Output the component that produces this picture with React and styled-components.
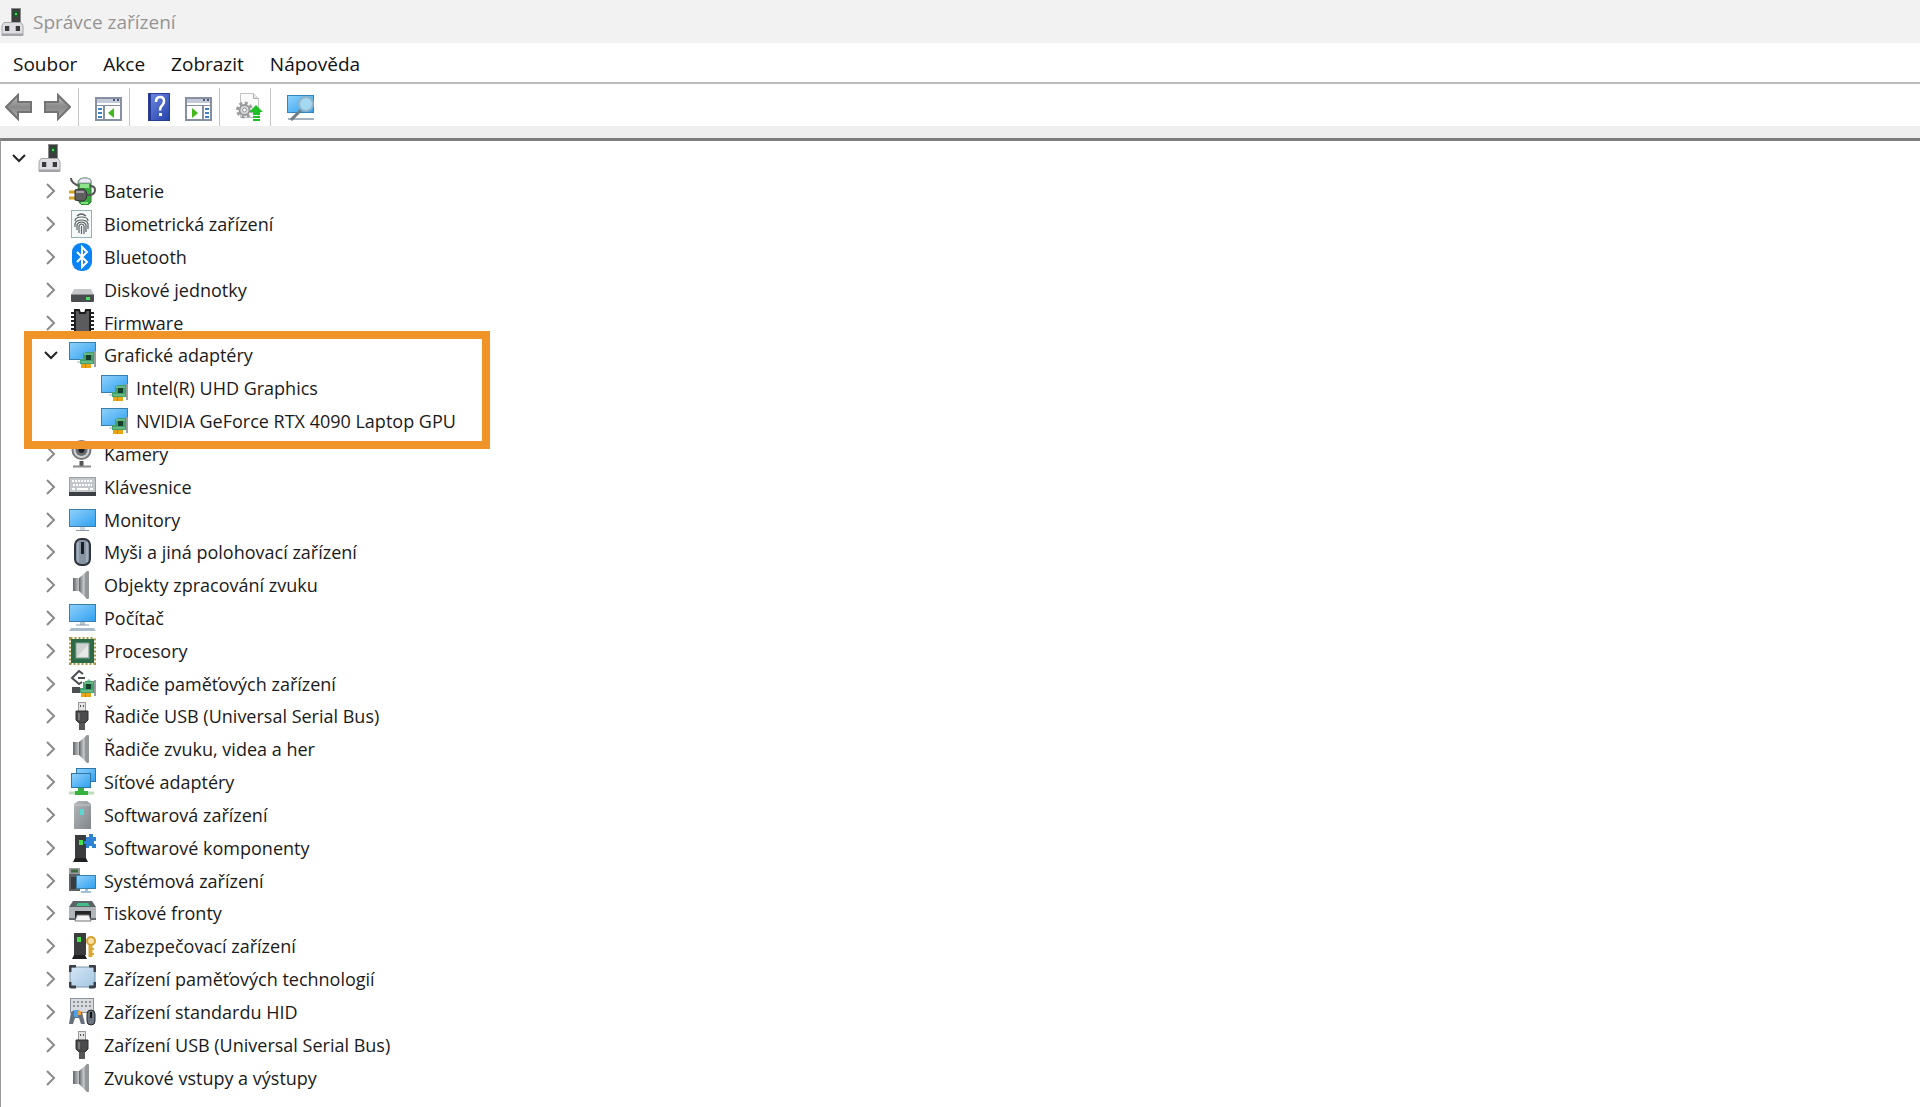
import React, { useState } from "react";
import styled, { createGlobalStyle } from "styled-components";

const Icon = ({ children }) => (
  <Glyph viewBox="0 0 27 28" aria-hidden="true">
    {children}
  </Glyph>
);

const Defs = () => (
  <HiddenSvg aria-hidden="true">
    <defs>
      <linearGradient id="screen" x1="0" y1="0" x2="1" y2="1">
        <stop offset="0" stopColor="#8fd2fb" />
        <stop offset="1" stopColor="#2f9ff0" />
      </linearGradient>
      <linearGradient id="steel" x1="0" y1="0" x2="1" y2="0">
        <stop offset="0" stopColor="#5f6266" />
        <stop offset="0.35" stopColor="#9a9da0" />
        <stop offset="0.7" stopColor="#c9cbcd" />
        <stop offset="1" stopColor="#85888b" />
      </linearGradient>
      <linearGradient id="arrow" x1="0" y1="0" x2="0" y2="1">
        <stop offset="0" stopColor="#bdbdbd" />
        <stop offset="0.5" stopColor="#8a8a8a" />
        <stop offset="1" stopColor="#ababab" />
      </linearGradient>
      <linearGradient id="tower" x1="0" y1="0" x2="1" y2="1">
        <stop offset="0" stopColor="#b4b8bb" />
        <stop offset="1" stopColor="#80858a" />
      </linearGradient>
      <linearGradient id="help" x1="0" y1="0" x2="1" y2="1">
        <stop offset="0" stopColor="#6f8be6" />
        <stop offset="1" stopColor="#2540a8" />
      </linearGradient>
      <linearGradient id="cell" x1="0" y1="0" x2="1" y2="1">
        <stop offset="0" stopColor="#d4e6f5" />
        <stop offset="1" stopColor="#a3c6e2" />
      </linearGradient>
    </defs>
  </HiddenSvg>
);

const RootIcon = () => (
  <Icon>
    <rect x="11.5" y="0.5" width="9" height="15" fill="#3b403e" stroke="#8a8a8a" />
    <rect x="14" y="3" width="4" height="6" fill="#1c5a2a" />
    <rect x="15" y="5" width="2" height="2" fill="#46e05c" />
    <path d="M4 14.5h17l2 3v10H2v-10z" fill="#dedee2" stroke="#a6a6ab" />
    <path d="M2 26.5h21" stroke="#a1a1a6" strokeWidth="2" />
    <rect x="5" y="18" width="4" height="5" fill="#3a3a3a" />
    <rect x="16" y="18" width="4" height="5" fill="#3a3a3a" />
    <path d="M9.500 18v5M15.500 18v5" stroke="#b0b0b4" />
  </Icon>
);

const BatteryIcon = () => (
  <Icon>
    <path d="M9 6q0-5 7-5t6 5v19q-1 3-6 3t-6-3z" fill="#35a83c" stroke="#2c7d33" />
    <path d="M9.500 6q0-5 6.500-5t6 5z" fill="#ececf6" stroke="#9c9caa" />
    <path d="M11 9h9" stroke="#8ce58a" strokeWidth="4" />
    <path d="M12 26h7" stroke="#7fe07f" strokeWidth="2" />
    <path d="M2 1q0 5 8 8M21 9q5 0 5 4t-5 5h-4" fill="none" stroke="#555" strokeWidth="2" />
    <path d="M0 15h6M0 21h6" stroke="#d9a520" strokeWidth="3" />
    <path d="M6 13l4-1h5q3 2 3 6t-3 6h-4l-5-1z" fill="#5f5f5f" stroke="#333" />
    <path d="M7 15h8" stroke="#a2a2a2" strokeWidth="2" />
  </Icon>
);

const FingerprintIcon = () => (
  <Icon>
    <rect x="2.5" y="0.5" width="20" height="27" fill="#f3f8f8" stroke="#8fb4b4" />
    <g fill="none" stroke="#5b6163" strokeWidth="1.2">
      <path d="M8 6q4-4 9 0M6 11q0-4 6.500-4T19 11" />
      <path d="M6 17v-3q1-4 6.500-4t6.500 4v5M8 20v-5q1-3 4.500-3t4.500 3v7M10 23v-7q1-2 2.500-2t2.500 2v8M12.500 24v-8" />
    </g>
  </Icon>
);

const BluetoothIcon = () => (
  <Icon>
    <rect x="3" y="0" width="20" height="28" rx="9" fill="#0a84f5" />
    <path d="M8 9l10 10-5 5V4l5 5L8 19" fill="none" stroke="#fff" strokeWidth="2" />
  </Icon>
);

const DiskIcon = () => (
  <Icon>
    <path d="M5 13h17l3 6H2z" fill="#c4c6c8" />
    <rect x="2" y="18" width="23" height="8" rx="1" fill="#4a4d50" />
    <path d="M2 18.5h23" stroke="#8d9093" />
    <rect x="17" y="21" width="4" height="3" fill="#46e05c" />
  </Icon>
);

const FirmwareIcon = () => (
  <Icon>
    <path d="M3.500 3v25M23.500 3v25" stroke="#222" strokeWidth="3" strokeDasharray="2 2" />
    <path d="M6 1h4l1 3h5l1-3h4v27H6z" fill="#5b5b5d" stroke="#1c1c1c" strokeWidth="2" />
  </Icon>
);

const Card = () => (
  <g>
    <path d="M14 12h2v-1h9v12H11v-5h3z" fill="#42a06a" />
    <path d="M15 13h9M12 21h12" stroke="#8fd0a2" />
    <rect x="17" y="14" width="5" height="5" fill="#153f2b" />
    <path d="M26 10v16" stroke="#9b9ea1" strokeWidth="2" />
    <path d="M12 25h10" stroke="#eba512" strokeWidth="4" />
    <path d="M16.500 23v4" stroke="#c98408" />
  </g>
);

const DisplayIcon = () => (
  <Icon>
    <rect x="0.5" y="1.5" width="26" height="17" fill="url(#screen)" stroke="#3b7ea8" />
    <path d="M8 21h5v-3h2" fill="none" stroke="#9bb4c4" />
    <Card />
  </Icon>
);

const CameraIcon = () => (
  <Icon>
    <circle cx="12.5" cy="10" r="9" fill="#d0d2d4" stroke="#77797b" strokeWidth="2" />
    <circle cx="12.5" cy="10" r="6" fill="#6b6e72" />
    <circle cx="12.5" cy="10" r="3" fill="#1e2124" />
    <path d="M12.500 21v5" stroke="#555" strokeWidth="4" />
    <path d="M4 26.5h18" stroke="#8b8b8b" strokeWidth="2" />
  </Icon>
);

const KeyboardIcon = () => (
  <Icon>
    <rect x="0.5" y="4.5" width="26" height="15" fill="#c3c6cb" stroke="#9a9ea5" />
    <path d="M3 8h21M4 12h19" stroke="#fff" strokeWidth="2" strokeDasharray="2 1" />
    <path d="M3 16h3M8 16h11M21 16h3" stroke="#fff" strokeWidth="2" />
    <rect x="0" y="19" width="27" height="4" fill="#3c3f44" />
  </Icon>
);

const MonitorIcon = () => (
  <Icon>
    <rect x="0.5" y="3.5" width="26" height="17" fill="url(#screen)" stroke="#3b7ea8" />
    <path d="M11 21h5v3h-5z" fill="#cfd6dc" />
    <path d="M7 24.5h13" stroke="#8a9aa8" />
  </Icon>
);

const MouseIcon = () => (
  <Icon>
    <rect x="6" y="1" width="15" height="26" rx="6" fill="#8593a2" stroke="#30353b" strokeWidth="2" />
    <path d="M9 4v20M18 4v20" stroke="#bcc6d0" />
    <path d="M13.500 4v12" stroke="#1b1f24" strokeWidth="3" />
  </Icon>
);

const SpeakerIcon = () => (
  <Icon>
    <rect x="4" y="7" width="9" height="13" fill="url(#steel)" />
    <path d="M10 7l7-6v26l-7-7z" fill="url(#steel)" />
    <rect x="17" y="0" width="3" height="28" rx="1" fill="#94979a" />
  </Icon>
);

const ComputerIcon = () => (
  <Icon>
    <rect x="0.5" y="0.5" width="26" height="17" fill="url(#screen)" stroke="#3b7ea8" />
    <path d="M11 18h5v3h-5z" fill="#b9c4ce" />
    <path d="M7 21h13" stroke="#8a9aa8" />
    <path d="M2 24h23l2 3H0z" fill="#a9bccb" />
  </Icon>
);

const CpuIcon = () => (
  <Icon>
    <rect x="1.5" y="1.5" width="24" height="25" fill="none" stroke="#a8983f" strokeWidth="3" strokeDasharray="2 2" />
    <rect x="2" y="2" width="23" height="24" fill="#2c6a48" />
    <rect x="7" y="6" width="13" height="15" fill="#cfd2d1" stroke="#87a596" />
    <path d="M8 20L19 8v12z" fill="#e6e8e7" />
  </Icon>
);

const StorageCtlIcon = () => (
  <Icon>
    <path d="M14 4l-4-3-7 7 7 6 3-2" fill="none" stroke="#4b4e51" strokeWidth="2" />
    <path d="M9 8h7" stroke="#4b4e51" strokeWidth="2" />
    <path d="M3 17h8v6H3z" fill="#4a4e51" />
    <path d="M14 14l6-5 5 5z" fill="#7cc896" />
    <Card />
  </Icon>
);

const UsbIcon = () => (
  <Icon>
    <rect x="9.5" y="0.5" width="7" height="10" fill="#e3e3e3" stroke="#999" />
    <path d="M11 4h1M14 4h1" stroke="#555" strokeWidth="2" />
    <path d="M7 9h12v9l-3 3h-6l-3-3z" fill="#4b4b4d" stroke="#2e2e30" />
    <path d="M10 11v7" stroke="#777" strokeWidth="2" />
    <rect x="10" y="21" width="6" height="7" fill="#555" />
  </Icon>
);

const NetworkIcon = () => (
  <Icon>
    <rect x="7.5" y="0.5" width="19" height="13" fill="url(#screen)" stroke="#2f75a5" />
    <rect x="2.5" y="5.5" width="19" height="14" fill="url(#screen)" stroke="#2f75a5" />
    <path d="M9 20h6v3h4v4H6v-4h3z" fill="#36b13e" />
    <path d="M0 25h6M19 25h6" stroke="#b8dfb9" strokeWidth="3" />
  </Icon>
);

const SoftDeviceIcon = () => (
  <Icon>
    <path d="M5 3l4-3h9l4 3v25H5z" fill="url(#tower)" />
    <path d="M5 4h17" stroke="#c7cacc" />
    <rect x="11" y="8" width="4" height="6" fill="#58d6cf" />
  </Icon>
);

const SoftComponentIcon = () => (
  <Icon>
    <path d="M6 1h11v23H6z" fill="#3a3c3e" />
    <path d="M4 28l2-4h11l2 4z" fill="#1f2022" />
    <rect x="10" y="6" width="4" height="5" fill="#46e04c" />
    <path d="M17 3h3V0h4v3h3v4h-2v3h2v4h-4v-2h-3v2h-3v-4h-2V7h2z" fill="#2f83d4" />
  </Icon>
);

const SystemIcon = () => (
  <Icon>
    <path d="M0 1h11v23H0z" fill="#5d6163" />
    <path d="M0 1h11v6H0z" fill="#9a9d9e" />
    <path d="M2 4h7" stroke="#3c6b3e" strokeWidth="3" />
    <path d="M2 10h6v12H2z" fill="#3a3d40" />
    <rect x="7.5" y="8.5" width="19" height="13" fill="url(#screen)" stroke="#3b7ea8" />
    <path d="M16 22h3v2h-3zM12 24h10v2H12z" fill="#9fc2d8" />
  </Icon>
);

const PrinterIcon = () => (
  <Icon>
    <path d="M4 2h19l4 6H0z" fill="#5d6266" />
    <path d="M9 4h10l2 3H7z" fill="#3fc08a" />
    <path d="M0 8h27v12H0z" fill="#b1b6bb" />
    <path d="M0 20h27" stroke="#63686c" strokeWidth="2" />
    <path d="M6 12h16v8H6z" fill="#222426" />
    <path d="M8 16h12l2 6H6z" fill="#f4f4f4" stroke="#777" />
  </Icon>
);

const SecurityIcon = () => (
  <Icon>
    <path d="M5 1h12v22H5z" fill="#3a3c3e" />
    <path d="M3 27l2-4h11l2 4z" fill="#1f2022" />
    <rect x="8" y="5" width="4" height="5" fill="#46e04c" />
    <circle cx="22" cy="9" r="4" fill="#f8dea0" stroke="#d5a131" strokeWidth="2" />
    <path d="M21.500 13v12" stroke="#dba733" strokeWidth="4" />
    <path d="M22 17h3M22 22h3" stroke="#dba733" strokeWidth="2" />
  </Icon>
);

const MemoryIcon = () => (
  <Icon>
    <rect x="1" y="2" width="25" height="20" rx="2" fill="url(#cell)" stroke="#7b95a8" />
    <path d="M1 7V3q0-2 2-2h4M20 1h4q2 0 2 2v4M26 17v3q0 2-2 2h-4M7 22H3q-2 0-2-2v-3" fill="none" stroke="#3a4045" strokeWidth="3" />
  </Icon>
);

const HidIcon = () => (
  <Icon>
    <rect x="1.5" y="0.5" width="23" height="14" fill="#d8dadd" stroke="#8c9097" />
    <path d="M4 4h18M4 8h18" stroke="#90949b" strokeWidth="2" strokeDasharray="2 2" />
    <path d="M0 26l2-12q5-4 11 0l3 12h-4l-2-6H6l-2 6z" fill="#66717d" />
    <rect x="5" y="12" width="4" height="7" fill="#4aa3ea" />
    <rect x="9" y="13" width="3" height="4" fill="#f0a23a" />
    <rect x="18" y="12" width="8" height="15" rx="4" fill="#6b7580" stroke="#24292e" />
    <path d="M22 14v6" stroke="#111" strokeWidth="2" />
  </Icon>
);

const ArrowIcon = ({ forward }) => (
  <Icon>
    <path
      d={forward ? "M1 9h13V2l12 12-12 12v-7H1z" : "M26 9H13V2L1 14l12 12v-7h13z"}
      fill="url(#arrow)"
      stroke="#737373"
      strokeWidth="2"
    />
  </Icon>
);

const PaneIcon = ({ right }) => (
  <Icon>
    <rect x="1" y="5" width="25" height="22" fill="#fff" stroke="#8790a3" strokeWidth="2" />
    <path d="M2 8h23" stroke="#c3c9d6" strokeWidth="4" />
    <path d="M18 7h2M22 7h2" stroke="#4b5875" strokeWidth="2" />
    <path d="M1 12.5h25" stroke="#8790a3" />
    <path d={right ? "M18 13v13" : "M9 13v13"} stroke="#8790a3" strokeWidth="2" />
    <path d={right ? "M20 16h4M20 20h4M20 24h4" : "M3 16h4M3 20h4M3 24h4"} stroke="#3d7fc4" strokeWidth="2" />
    <path d={right ? "M7 15v10l6-5z" : "M19 15v10l-6-5z"} fill="#43b81f" />
  </Icon>
);

const HelpIcon = () => (
  <Icon>
    <rect x="2.5" y="0.5" width="21" height="27" fill="url(#help)" stroke="#2b3d8f" />
    <path d="M4 1v26" stroke="#24398f" strokeWidth="2" />
    <path d="M10 9q0-5 4-5t4 4q0 3-2 4.500t-2 5" fill="none" stroke="#fff" strokeWidth="2.5" />
    <rect x="13" y="20" width="3" height="3" fill="#fff" />
  </Icon>
);

const UpdateIcon = () => (
  <Icon>
    <path d="M4.500 0.500h13l5 5v19h-18z" fill="#fafafa" stroke="#c2c2c2" />
    <path d="M17.500 0.500v5h5" fill="#e5e5e5" stroke="#b0b0b0" />
    <circle cx="8.5" cy="17" r="7" fill="none" stroke="#9b9d9f" strokeWidth="3" strokeDasharray="3 2.5" />
    <circle cx="8.5" cy="17" r="5" fill="#dcdddd" stroke="#98999b" strokeWidth="2" />
    <circle cx="8.5" cy="17" r="2" fill="#fff" stroke="#8f9193" />
    <path d="M20 12l7 7h-3v3h-7v-3h-4z" fill="#20c126" />
    <path d="M17 24h7M17 27h7" stroke="#20c126" strokeWidth="2" />
  </Icon>
);

const ScanIcon = () => (
  <Icon>
    <rect x="0.5" y="2.5" width="26" height="17" fill="url(#screen)" stroke="#2f87bd" />
    <path d="M1 26h26" stroke="#a3b2bd" strokeWidth="2" />
    <path d="M14 17l-10 10" stroke="#6f7d88" strokeWidth="3" />
    <circle cx="19" cy="11" r="7" fill="#a5d8f3" stroke="#8fb4c8" strokeWidth="2" />
  </Icon>
);

const Chevron = ({ open }) => (
  <ChevronSvg viewBox="0 0 16 16" $open={open} aria-hidden="true">
    <path d={open ? "M2 5l6 6 6-6" : "M4 1l7 7-7 7"} />
  </ChevronSvg>
);

const menus = ["Soubor", "Akce", "Zobrazit", "Nápověda"];

const toolGroups = [
  [
    { label: "Zpět", icon: <ArrowIcon /> },
    { label: "Vpřed", icon: <ArrowIcon forward /> },
  ],
  [{ label: "Zobrazit strom konzoly", icon: <PaneIcon /> }],
  [
    { label: "Nápověda k zařízení", icon: <HelpIcon /> },
    { label: "Podokno akcí", icon: <PaneIcon right /> },
  ],
  [{ label: "Aktualizovat ovladač", icon: <UpdateIcon /> }],
  [{ label: "Vyhledat změny hardwaru", icon: <ScanIcon /> }],
];

const categories = [
  { name: "Baterie", icon: BatteryIcon },
  { name: "Biometrická zařízení", icon: FingerprintIcon },
  { name: "Bluetooth", icon: BluetoothIcon },
  { name: "Diskové jednotky", icon: DiskIcon },
  { name: "Firmware", icon: FirmwareIcon },
  {
    name: "Grafické adaptéry",
    icon: DisplayIcon,
    devices: ["Intel(R) UHD Graphics", "NVIDIA GeForce RTX 4090 Laptop GPU"],
  },
  { name: "Kamery", icon: CameraIcon },
  { name: "Klávesnice", icon: KeyboardIcon },
  { name: "Monitory", icon: MonitorIcon },
  { name: "Myši a jiná polohovací zařízení", icon: MouseIcon },
  { name: "Objekty zpracování zvuku", icon: SpeakerIcon },
  { name: "Počítač", icon: ComputerIcon },
  { name: "Procesory", icon: CpuIcon },
  { name: "Řadiče paměťových zařízení", icon: StorageCtlIcon },
  { name: "Řadiče USB (Universal Serial Bus)", icon: UsbIcon },
  { name: "Řadiče zvuku, videa a her", icon: SpeakerIcon },
  { name: "Síťové adaptéry", icon: NetworkIcon },
  { name: "Softwarová zařízení", icon: SoftDeviceIcon },
  { name: "Softwarové komponenty", icon: SoftComponentIcon },
  { name: "Systémová zařízení", icon: SystemIcon },
  { name: "Tiskové fronty", icon: PrinterIcon },
  { name: "Zabezpečovací zařízení", icon: SecurityIcon },
  { name: "Zařízení paměťových technologií", icon: MemoryIcon },
  { name: "Zařízení standardu HID", icon: HidIcon },
  { name: "Zařízení USB (Universal Serial Bus)", icon: UsbIcon },
  { name: "Zvukové vstupy a výstupy", icon: SpeakerIcon },
];

function App() {
  const [open, setOpen] = useState(true);

  return (
    <Window>
      <GlobalStyle />
      <Defs />
      <TitleBar>
        <RootIcon />
        <Title>Správce zařízení</Title>
      </TitleBar>
      <MenuBar>
        {menus.map((m) => (
          <MenuButton key={m}>{m}</MenuButton>
        ))}
      </MenuBar>
      <Toolbar>
        {toolGroups.map((group, i) => (
          <ToolGroup key={i}>
            {group.map((t) => (
              <ToolButton key={t.label} aria-label={t.label}>
                {t.icon}
              </ToolButton>
            ))}
          </ToolGroup>
        ))}
      </Toolbar>
      <Tree role="tree" aria-label="Zařízení">
        <Row role="treeitem" aria-level={1} aria-expanded="true" $level={0}>
          <Toggle aria-label="Sbalit počítač">
            <Chevron open />
          </Toggle>
          <RootIcon />
        </Row>
        {categories.map((c) => {
          const expanded = Boolean(c.devices) && open;
          return (
            <React.Fragment key={c.name}>
              <Row role="treeitem" aria-level={2} aria-expanded={expanded} $level={1}>
                <Toggle aria-label={c.name} onClick={c.devices ? () => setOpen(!open) : undefined}>
                  <Chevron open={expanded} />
                </Toggle>
                <c.icon />
                <Label>{c.name}</Label>
              </Row>
              {expanded &&
                c.devices.map((d) => (
                  <Row key={d} role="treeitem" aria-level={3} $level={2}>
                    <ToggleSpace />
                    <c.icon />
                    <Label>{d}</Label>
                  </Row>
                ))}
            </React.Fragment>
          );
        })}
        {open && <Highlight aria-hidden="true" />}
      </Tree>
    </Window>
  );
}

const GlobalStyle = createGlobalStyle`
  * {
    box-sizing: border-box;
  }

  body {
    margin: 0;
    background: #fff;
    color: #1a1a1a;
    font-family: "Open Sans", "Noto Sans", sans-serif;
    font-size: 18px;
  }

  button {
    border: 0;
    padding: 0;
    background: none;
    color: inherit;
    font: inherit;
  }
`;

const Window = styled.div`
  display: flex;
  flex-direction: column;
  min-height: 100vh;
`;

const HiddenSvg = styled.svg`
  position: absolute;
  width: 0;
  height: 0;
`;

const Glyph = styled.svg`
  display: block;
  flex: none;
  width: 27px;
  height: 28px;
`;

const TitleBar = styled.header`
  display: flex;
  align-items: center;
  gap: 6px;
  height: 43px;
  padding-top: 1px;
  background: #f2f2f2;
  color: #949494;
`;

const Title = styled.h1`
  margin: 0;
  font-size: 19px;
  font-weight: 400;
`;

const MenuBar = styled.nav`
  display: flex;
  align-items: center;
  height: 41px;
  padding-top: 2px;
  border-bottom: 2px solid #bcbcbe;
`;

const MenuButton = styled.button`
  padding: 0 13px;
  color: #111;
  font-size: 19px;
`;

const Toolbar = styled.div`
  display: flex;
  align-items: center;
  height: 54px;
  padding-top: 4px;
  padding-left: 5px;
  border-bottom: 12px solid #efefef;
`;

const ToolGroup = styled.div`
  display: flex;
  align-items: center;
  gap: 12px;
  height: 38px;
  padding: 0 7px 0 16px;
  border-right: 1px solid #c6c6c6;

  &:first-child {
    padding-left: 0;
  }

  &:last-child {
    border-right: 0;
  }
`;

const ToolButton = styled.button`
  display: grid;
  place-items: center;
`;

const Tree = styled.ul`
  position: relative;
  display: grid;
  flex: 1;
  grid-auto-rows: minmax(32px, 1fr);
  margin: 0;
  padding: 1px 0 13px;
  border-top: 3px solid #7d7d7d;
  border-left: 1px solid #9a9a9a;
  list-style: none;
`;

const Row = styled.li`
  display: flex;
  align-items: center;
  padding-left: ${({ $level }) => 4 + $level * 32}px;
`;

const Toggle = styled.button`
  display: grid;
  place-items: center;
  width: 27px;
  height: 28px;
  margin-right: 5px;
`;

const ToggleSpace = styled.span`
  width: 32px;
`;

const ChevronSvg = styled.svg`
  width: 16px;
  height: 16px;
  fill: none;
  stroke: ${({ $open }) => ($open ? "#222" : "#8a8a8a")};
  stroke-width: 2px;
`;

const Label = styled.span`
  padding-left: 8px;
  white-space: nowrap;
`;

/* frame laid over the graphics adapter rows */
const Highlight = styled.li`
  position: absolute;
  grid-row: 7 / 10;
  top: -8px;
  bottom: -12px;
  left: 23px;
  width: 466px;
  border: 8px solid #f09428;
  pointer-events: none;
`;

export default App;
